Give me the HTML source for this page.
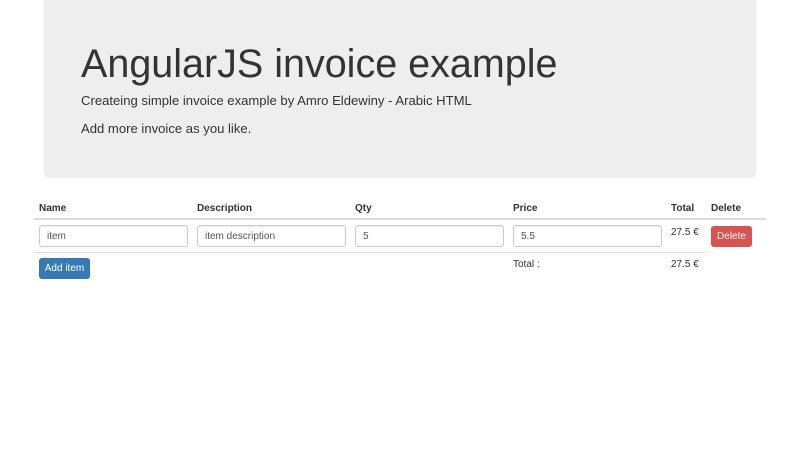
<!DOCTYPE html>
<html><head><style>
body{margin:0;font-family:"Liberation Sans",sans-serif;color:#333;font-size:14px;background:#fff}
.j{position:absolute;left:44px;top:0;width:712px;height:178px;background:#eee;border-radius:0 0 6px 6px}
h1{position:absolute;left:37px;top:40px;margin:0;font-size:39.5px;font-weight:400;line-height:48px}
.p{position:absolute;left:37px;font-size:13.1px;line-height:18px}
.t{position:absolute;font-size:10px}
.b{font-weight:bold}
.in{position:absolute;top:225px;height:20px;width:140px;border:1px solid #ccc;border-radius:3px;background:#fff;font-size:10px;line-height:22px;box-sizing:content-box;padding-left:7px;color:#555;box-shadow:inset 0 1px 1px rgba(0,0,0,.075)}
.line{position:absolute;background:#ddd}
.btn{position:absolute;color:#fff;font-size:10px;text-align:center;border-radius:3px}
</style></head><body>
<div class="j">
<h1>AngularJS invoice example</h1>
<div class="p" style="top:92px">Createing simple invoice example by Amro Eldewiny - Arabic HTML</div>
<div class="p" style="top:120px">Add more invoice as you like.</div>
</div>
<div class="t b" style="left:39px;top:203px">Name</div>
<div class="t b" style="left:197px;top:203px">Description</div>
<div class="t b" style="left:355px;top:203px">Qty</div>
<div class="t b" style="left:513px;top:203px">Price</div>
<div class="t b" style="left:671px;top:203px">Total</div>
<div class="t b" style="left:711px;top:203px">Delete</div>
<div class="line" style="left:34px;top:218px;width:732px;height:2px"></div>
<div class="in" style="left:39px">item</div>
<div class="in" style="left:197px">item description</div>
<div class="in" style="left:355px">5</div>
<div class="in" style="left:513px">5.5</div>
<div class="t" style="left:671px;top:227px">27.5 €</div>
<div class="btn" style="left:711px;top:226px;width:41px;height:21px;line-height:21px;background:#d9534f">Delete</div>
<div class="line" style="left:34px;top:252px;width:671px;height:1px"></div>
<div class="btn" style="left:39px;top:258px;width:51px;height:21px;line-height:21px;background:#337ab7">Add item</div>
<div class="t" style="left:513px;top:259px">Total :</div>
<div class="t" style="left:671px;top:259px">27.5 €</div>
</body></html>
